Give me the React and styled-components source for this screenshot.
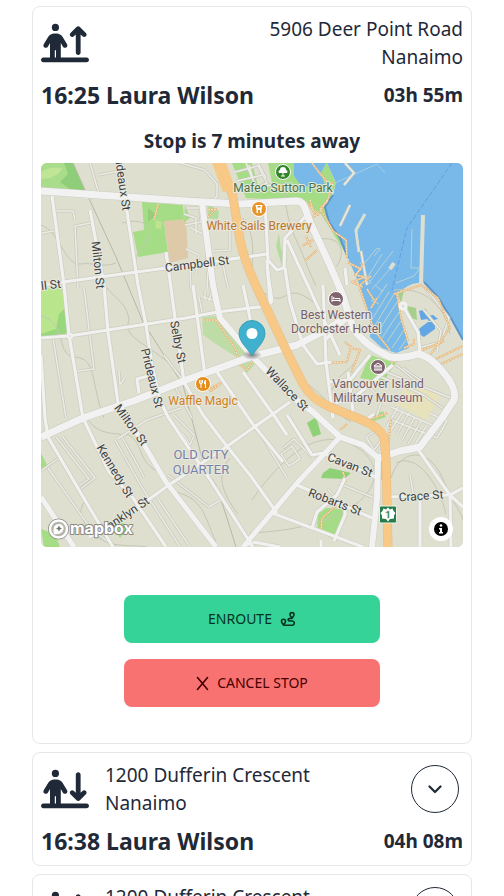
import React from "react";
import styled, { createGlobalStyle } from "styled-components";
import { FaPersonArrowUpFromLine, FaPersonArrowDownToLine } from "react-icons/fa6";

const GlobalStyle = createGlobalStyle`
  *, *::before, *::after { box-sizing: border-box; }
  body {
    margin: 0;
    background: #ffffff;
    color: #1f2937;
    font-family: "Noto Sans", "Open Sans", sans-serif;
  }
`;

const StopList = styled.main`
  display: flex;
  flex-direction: column;
  gap: 8px;
  height: 100vh;
  padding: 6px 32px;
  overflow-y: auto;
  scrollbar-width: none;
`;

const Card = styled.article`
  display: flex;
  flex-direction: column;
  flex-shrink: 0;
  gap: 8px;
  padding: 8px 8px ${(p) => (p.$open ? "36px" : "8px")};
  border: 1px solid #e5e7eb;
  border-radius: 8px;
`;

const Header = styled.header`
  display: flex;
  align-items: center;
  gap: 16px;
`;

const Direction = styled.span`
  display: flex;
  flex-shrink: 0;
  font-size: 48px;
`;

const Address = styled.address`
  flex: 1;
  font-size: 19px;
  font-style: normal;
  line-height: 28px;
  text-align: ${(p) => (p.$end ? "right" : "left")};
`;

const ExpandButton = styled.button`
  display: flex;
  align-items: center;
  justify-content: center;
  width: 48px;
  height: 48px;
  margin-right: 4px;
  padding: 0;
  border: 1px solid #1f2937;
  border-radius: 50%;
  background: transparent;
  color: #1f2937;
`;

const Summary = styled.div`
  display: flex;
  align-items: center;
  justify-content: space-between;
`;

const Passenger = styled.h2`
  margin: 0;
  font-size: 23px;
  font-weight: 700;
  line-height: 32px;
`;

const Countdown = styled.span`
  font-size: 19px;
  font-weight: 700;
  line-height: 28px;
`;

const Distance = styled.p`
  margin: 8px 0 0;
  font-size: 19px;
  font-weight: 700;
  line-height: 28px;
  text-align: center;
`;

const MapFrame = styled.div`
  position: relative;
  height: 384px;
  overflow: hidden;
  border-radius: 6px;
  background: #dedfcf;
`;

const MapCanvas = styled.svg`
  display: block;
  width: 100%;
  height: 100%;
`;

const LogoLink = styled.a`
  position: absolute;
  bottom: 6px;
  left: 6px;
  display: flex;
`;

const InfoButton = styled.button`
  position: absolute;
  right: 10px;
  bottom: 6px;
  display: flex;
  align-items: center;
  justify-content: center;
  width: 24px;
  height: 24px;
  padding: 0;
  border: 0;
  border-radius: 50%;
  background: #ffffff;
`;

const Actions = styled.div`
  display: flex;
  flex-direction: column;
  align-items: center;
  gap: 16px;
  margin-top: 40px;
`;

const ActionButton = styled.button`
  display: flex;
  align-items: center;
  justify-content: center;
  gap: 8px;
  width: 256px;
  max-width: 100%;
  height: 48px;
  border: 0;
  border-radius: 8px;
  background: ${(p) => (p.$tone === "success" ? "#36d399" : "#f87272")};
  color: ${(p) => (p.$tone === "success" ? "#003320" : "#470000")};
  font-family: inherit;
  font-size: 14px;
  line-height: 16px;
`;

const MapLabel = styled.text`
  font-family: Roboto, "Liberation Sans", sans-serif;
  font-size: ${(p) => p.$size || 12}px;
  font-weight: ${(p) => p.$weight || 400};
  fill: ${(p) => p.$color || "#3d3f45"};
  stroke: #e8e8dc;
  stroke-width: 2px;
  stroke-linejoin: round;
  paint-order: stroke;
  text-anchor: middle;
`;

const Wordmark = styled.text`
  font-family: Inter, "Open Sans", sans-serif;
  font-size: 16px;
  font-weight: 700;
  fill: #ffffff;
  stroke: #8a8a80;
  stroke-width: 2px;
  stroke-linejoin: round;
  paint-order: stroke;
`;

const parks = [
  ["#a9dc8b", "M41 163H73L85 191L41 188Z"],
  ["#8fce78", "M64 163H73L85 191L71 190L60 182L68 174Z"],
  ["#c0e594", "M41 172Q50 166 62 168Q61 174 50 178L41 179Z"],
  ["#a5dc86", "M142 202L183 205L184 220L164 222L168 252L138 257L133 232L144 230Z"],
  ["#94ce7b", "M148 208L156 215L148 222Z"],
  ["#bfe48f", "M156 220L162 222L161 229L155 228Z"],
  ["#decaa8", "M164 221L186 219L188 258L170 263Z"],
  ["#b9e68c", "M41 288H62L68 333L41 338Z"],
  ["#98d77c", "M59 314L65 308L68 333L41 338V334L56 329Z"],
  ["#a5dc86", "M232 163H327L336 184L326 208L334 226L347 255L343 262L320 222L306 201L246 198Z"],
  ["#dedfcf", "M252 163H268L272 183L258 186Z M305 204L321 214L346 254L346 290L336 282Z"],
  ["#bedca5", "M202 317L216 316L246 352L238 358L222 348L203 335Z M241 363L258 361L246 374Z"],
  ["#b5dca0", "M279 233L276 246L282 266L287 262L281 249Z M207 203L219 211L218 220L208 218Z"],
  ["#a5dc86", "M370 355L396 363L383 382L360 378Z"],
  ["#e8e2bb", "M406 385L441 394L427 420L396 404Z"],
  ["#8fd176", "M307 423L316 417L321 434L313 437Z M321 478L323 473L330 468L351 473L344 479Z"],
  ["#a5dc86", "M318 514L326 508L343 509L345 516L334 539L317 531Z M380 460L382 459L383 480L380 481Z"],
  ["#a5dc86", "M41 453L48 467L41 470Z M41 529L55 534L60 547H44Z M113 526L122 522L128 528L120 538Z"],
  ["#a5dc86", "M366 418L383 411L386 417L374 421Z M185 205L190 218L184 222Z"],
];

const water =
  "M327 163H463V340L452 320L438 297L424 282L412 284L396 293L402 322L409 348L396 353L382 348L370 337L370 316L360 286L348 258L340 238L329 222L325 207L333 195L336 183Z M294 163H326L321 173L325 185L311 184L303 188L294 176Z";

const contours = [
  "M41 225C60 231 64 265 80 264C92 262 105 268 116 263",
  "M122 223C148 216 159 231 140 250C132 260 139 264 133 271",
  "M41 316C66 321 56 353 73 357C98 357 90 383 104 418",
  "M107 288C119 302 127 304 129 320C121 340 153 343 183 377",
  "M85 415C95 433 106 433 129 435C144 444 137 462 159 472L176 492C203 499 204 515 216 542",
  "M86 500C76 511 82 522 94 534C110 549 128 544 147 547",
  "M252 500C280 460 318 422 358 448S366 528 250 533",
  "M391 478C400 448 429 447 442 477S461 512 463 520",
  "M396 463C417 452 439 484 446 514",
  "M243 218C265 249 239 276 264 293S284 279 313 302",
  "M274 163C288 187 283 212 294 235S306 265 316 286",
  "M320 239C343 236 346 254 336 267",
  "M230 458C216 474 221 492 238 514",
  "M332 390C341 367 353 375 360 350",
  "M300 380C322 390 335 415 351 422",
  "M394 290C428 286 446 310 450 334",
];

const lanes = [
  "M90 163L99 194L86 199", "M98 175L120 171", "M56 211H73L75 220", "M42 233L54 231",
  "M91 223L75 226L78 288", "M84 288L94 369L78 371", "M53 338L66 418",
  "M186 208H200L201 222L185 225", "M191 228L207 236V263L190 265", "M215 220L230 228V250L214 251",
  "M186 249L199 255L196 274", "M196 234V218L184 214", "M190 270L191 290", "M208 270L207 289",
  "M215 265L222 260L228 288", "M180 201C198 194 211 206 217 196V184L205 170L180 163",
  "M235 172L258 166L267 183L247 191", "M237 181L263 175M243 190L271 185M249 165L256 190",
  "M246 163L252 178M258 163L266 178", "M56 437L89 479L80 485M42 470L60 457",
  "M63 437L95 478L79 490", "M115 440L143 489L180 547", "M117 439L147 420L181 408",
  "M122 437L144 477", "M48 468L91 529L115 547", "M174 415L194 435L190 445L182 433",
  "M209 507L222 499L218 489", "M156 496L190 547", "M168 475L209 507",
  "M283 448L294 439L312 457M281 454L292 446L300 459L289 466L281 454",
  "M199 297L202 312M203 297L215 301M205 291V300M212 290L209 301",
  "M389 419L437 438L447 421L429 413M391 407L432 425M398 407L387 426M403 411L391 430M409 413L397 434M415 417L402 440M421 421L408 444M427 425L414 446",
  "M381 377L422 394L444 409M386 372L451 398M396 365L416 381M403 368L420 380",
  "M366 437L375 431L382 439L374 450L366 437", "M125 377L120 385L119 371",
  "M258 430L287 478M410 475L414 498M328 489L336 498M338 483L372 497",
  "M345 163L354 173L344 185M350 205L340 226M361 251L367 285",
  "M164 355L184 382M171 379L192 418", "M424 286L449 318L441 342L422 347",
  "M423 309L441 331L437 352", "M370 388L382 400L376 418",
];

const streets = [
  "M52 196L62 270L64 285L69 335L83 418L109 472L133 498L166 547",
  "M90 210L104 285L108 332L118 403",
  "M119 163L126 205L138 285L146 325L152 365L160 400L168 417L209 478L253 547",
  "M166 252L171 288L175 318L184 382L203 415L226 445L250 475L277 513",
  "M41 285L63 282L166 268L267 254",
  "M41 338L69 336L186 318L217 312L268 306L272 301L267 267",
  "M41 355L45 418L48 437L79 490L113 547",
  "M89 537L133 511L166 487L226 447L290 402",
  "M217 372L252 423L283 462",
  "M243 372L275 417L287 435",
  "M265 203L268 260L277 270L284 268L285 238L305 217",
  "M287 240L310 290L340 355",
  "M285 268L290 302L303 345L317 364L331 362",
  "M243 285L250 318L251 350", "M193 285L205 375", "M267 260L270 302",
  "M323 285L326 362L333 418", "M326 339L347 319",
  "M370 355L350 380L330 382", "M393 365L357 395L336 403", "M348 372L353 412",
  "M403 306L418 332L420 353", "M287 415L312 455L323 453", "M323 453L375 477",
  "M297 485L372 518", "M272 513L363 547", "M345 478L337 495L317 512L312 528",
  "M345 505V515L334 541", "M388 497L450 495", "M420 498V547",
  "M417 448L450 495L451 547", "M450 495L463 507M450 495L463 488",
  "M253 542L280 547M321 540V547M243 547L252 542",
  "M139 393L137 379L148 376", "M345 268L347 285", "M368 418L374 414",
];

const avenues = [
  ["M41 191L186 201L240 204L297 201Q303 202 305 208L310 222L329 263L343 296L353 328Q366 347 390 357Q404 359 417 354Q429 355 443 372Q457 388 454 400L442 418L420 447L400 451L378 458", 7],
  ["M41 437L83 418L136 400L186 380L250 357L297 345L330 328L345 318", 7],
  ["M202 203L213 285L220 318L253 357L290 395L313 412L340 437L363 445L378 458L377 498L372 547", 6],
  ["M340 437L297 483L243 547", 5],
  ["M118 403L146 448L166 482L216 547", 5],
  ["M41 497L74 547", 5],
];

const highway =
  "M221 163L233 197L240 240Q244 260 257 288L287 352L303 384Q311 399 330 407L362 420Q379 427 384 437L386 458L388 547";

const trails = [
  "M158 204L154 220", "M312 163L318 171L328 183L333 183M332 185L327 202L320 208L333 231L346 240L347 258",
  "M306 202L318 215L327 200M305 211L314 218M310 200L315 217", "M208 210L216 209L207 218",
  "M203 320L216 320L235 348L240 365L247 370L253 360", "M209 389L223 382L211 391Z",
  "M302 246L313 240M306 236L311 247M305 261L317 250",
  "M347 262L361 269L355 275L365 277L352 282L363 287", "M364 263L356 275M371 276L360 285",
  "M359 287L374 330L390 350M367 289L374 300M371 308L377 298", "M397 294L401 318L408 341",
  "M394 294L421 285L438 298L450 328L430 355", "M391 363L444 341M439 365L463 354M432 361L463 346",
  "M328 363L347 362L351 347L345 342M351 348L360 350L351 373", "M404 348L414 344L414 338",
  "M343 472L346 482M336 506L322 518L321 532", "M391 418L388 448M391 457H384",
  "M162 489L167 486M340 430L347 424", "M367 420L388 413",
];

const docks = [
  ["M335 183L377 164L385 173", 1, "#a8cde0"],
  ["M423 215L421 284", 4, "#dedfcf"],
  ["M365 214L356 230L359 252", 3, "#dedfcf"],
  ["M358 232L361 252", 1, "#78b9ea"],
  ["M412 229L411 268H420L414 276L396 283", 1, "#b5d1d6"],
  ["M377 248L363 265M382 254L366 280M393 251L368 284M377 248L380 249L374 256", 1, "#b5d1d6"],
  ["M394 263L390 269", 4, "#dedfcf"],
  ["M390 269L372 289M360 262L371 284", 1, "#b5d1d6"],
  ["M387 284L373 305M389 292L371 321M394 294L374 327M397 302L376 335M399 312L382 338M401 321L387 342M404 330L392 348M408 337L399 350M375 285L383 292M371 300L379 304", 1, "#c0d4cb"],
];

const streetLabels = [
  ["ideaux St", 123, 186, 82], ["Milton St", 98, 265, 84], ["Campbell St", 197, 264, -7],
  ["ll St", 51, 285, -7], ["Selby St", 178, 342, 79], ["Prideaux St", 152, 378, 76],
  ["Milton St", 131, 425, 54], ["Wallace St", 287, 389, 46], ["Kennedy St", 115, 471, 59],
  ["anklyn St", 128, 513, -34], ["Cavan St", 350, 465, 21], ["Robarts St", 335, 502, 21],
  ["Crace St", 421, 496, -4],
];

const placeLabels = [
  ["Mafeo Sutton Park", 283, 192, "#46734a"],
  ["White Sails Brewery", 259, 230, "#bb7429"],
  ["Best Western", 336, 319, "#765e6b"],
  ["Dorchester Hotel", 336, 333, "#765e6b"],
  ["Vancouver Island", 378, 388, "#765e6b"],
  ["Military Museum", 378, 402, "#765e6b"],
  ["Waffle Magic", 203, 405, "#cf8020"],
];

function PlacePin({ x, y, color, children }) {
  return (
    <g transform={`translate(${x} ${y})`} stroke="#ffffff" fill="none">
      <circle r="7.5" fill={color} />
      {children}
    </g>
  );
}

function CityMap() {
  return (
    <MapCanvas viewBox="41 163 422 384" preserveAspectRatio="xMidYMid slice" role="img" aria-label="Map of the stop in Nanaimo">
      <defs>
        <radialGradient id="pin-shadow">
          <stop offset="0" stopColor="#333" stopOpacity="0.6" />
          <stop offset="1" stopColor="#333" stopOpacity="0" />
        </radialGradient>
      </defs>
      <path d="M41 163H463V547H41Z" fill="#dedfcf" />
      {parks.map(([fill, d]) => <path key={d} d={d} fill={fill} />)}
      <path d={water} fill="#78b9ea" />
      <path d="M333 195L325 207L329 222L340 238L348 258M424 282L438 297L452 320L463 340" fill="none" stroke="#5c96c7" strokeWidth="2" />
      <path d="M399 293L408 286L420 284L434 298L450 325L446 342L424 350L409 347L403 322Z" fill="#dedfcf" />
      <path d="M398 294L404 290L401 303ZM407 306L416 308L417 320L411 318Z" fill="#a5cf8b" />
      <path d="M419 311L426 309L427 316L433 315L438 319L429 321L427 319L421 320ZM420 328L428 322L435 322V329L424 337L417 333Z" fill="#62a6e6" />
      <path d="M452 163L407 228L392 290" fill="none" stroke="#609fdd" strokeDasharray="5 2" />
      <g fill="none">
        {docks.map(([d, width, color]) => <path key={d} d={d} stroke={color} strokeWidth={width} />)}
      </g>
      <g fill="none" stroke="#c5c6b6">
        {contours.map((d) => <path key={d} d={d} />)}
        <path d="M73 163L86 192L116 257L143 322L183 385L205 470L216 485L226 515L236 547" stroke="#b7b8a9" />
      </g>
      <g fill="none" strokeLinejoin="round">
        {lanes.map((d) => <path key={d} d={d} stroke="#c9cabd" strokeWidth="3" />)}
        {lanes.map((d) => <path key={`${d}-top`} d={d} stroke="#ecece6" strokeWidth="1.5" />)}
        {trails.map((d) => <path key={d} d={d} stroke="#e6b67b" strokeWidth="2" />)}
        {trails.map((d) => <path key={`${d}-top`} d={d} stroke="#f9e9cd" strokeWidth="1" strokeDasharray="2 1" />)}
        {streets.map((d) => <path key={d} d={d} stroke="#cdcec2" strokeWidth="4.5" />)}
        {avenues.map(([d, width]) => <path key={d} d={d} stroke="#cccdc3" strokeWidth={width + 1} />)}
        {streets.map((d) => <path key={`${d}-top`} d={d} stroke="#f1f1f0" strokeWidth="3.2" />)}
        {avenues.map(([d, width]) => <path key={`${d}-top`} d={d} stroke="#f2f2f2" strokeWidth={width} />)}
        <path d={highway} stroke="#e2bd8a" strokeWidth="9" />
        <path d={highway} stroke="#f8c986" strokeWidth="8" />
        <path d="M216 155L229 190" stroke="#f8c986" strokeWidth="13" />
      </g>
      <circle cx="403" cy="306" r="3" fill="#dedfcf" stroke="#f2f2f2" strokeWidth="3" />
      <circle cx="70" cy="336" r="2" fill="#dedfcf" stroke="#f2f2f2" strokeWidth="2" />
      {streetLabels.map(([name, x, y, angle]) => (
        <MapLabel key={`${name}-${x}`} transform={`translate(${x} ${y}) rotate(${angle})`} y="4">{name}</MapLabel>
      ))}
      {placeLabels.map(([name, x, y, color]) => (
        <MapLabel key={name} x={x} y={y} $color={color}>{name}</MapLabel>
      ))}
      <MapLabel x="201" y="459" $size={13} $color="#7881a8">OLD CITY</MapLabel>
      <MapLabel x="201" y="474" $size={13} $color="#7881a8">QUARTER</MapLabel>
      <PlacePin x={283} y={172} color="#35862b">
        <path d="M0 0V4M-2 4H2" />
        <path d="M-4 1A2 2 0 0 1-3-2A3 3 0 0 1 3-2A2 2 0 0 1 4 1Z" fill="#fff" stroke="none" />
      </PlacePin>
      <PlacePin x={259} y={209} color="#e7942c">
        <path d="M-3.500-4H3.500L2.500 1V4H1V1H-1V4H-2.500V1ZM-1.500-3V-1.500H1.500V-3Z" fill="#fff" fillRule="evenodd" stroke="none" />
      </PlacePin>
      <PlacePin x={336} y={299} color="#80656f">
        <path d="M-4-3V3M4 0V3M-4 1.5H4M-1-.5H4" />
        <circle cx="-2.2" cy="-.7" r="1" fill="#fff" stroke="none" />
      </PlacePin>
      <PlacePin x={378} y={367} color="#80656f">
        <path d="M-4-1L0-4L4-1ZM-4 3H4M-3-1V3M-1-1V3M1-1V3M3-1V3" />
      </PlacePin>
      <PlacePin x={203} y={384} color="#e58e1c">
        <path d="M-2-4V4M-3.5-4V-1Q-2 1-.5-1V-4M2.5 4V-4Q1-3 1.5 0H2.5" />
      </PlacePin>
      <g>
        <rect x="379.5" y="506" width="17" height="17" rx="1.5" fill="#287d4c" stroke="#eef2e8" />
        <path d="M388 507.500L390 509.500L392.500 508.500L393.500 511L395.500 513L394 515.500L394 518.500L390 519L388 521.500L386 519L382 518.500L382 515.500L380.500 513L382.500 511L383.500 508.500L386 509.500Z" fill="#fff" />
        <MapLabel x="388" y="518" $size={9} $weight={500} $color="#287d4c">1</MapLabel>
      </g>
      <ellipse cx="252" cy="355" rx="10" ry="5" fill="url(#pin-shadow)" />
      <path d="M252 355.500C249 350 239 342 239 333.500A13 13 0 0 1 265 333.500C265 342 255 350 252 355.500Z" fill="#3fb1ce" stroke="#399fb9" />
      <circle cx="252" cy="333.500" r="5.500" fill="#fff" />
    </MapCanvas>
  );
}

function MapboxLogo() {
  return (
    <svg width="96" height="24" viewBox="0 0 96 24" aria-hidden="true">
      <circle cx="11.500" cy="12" r="9" fill="#b5b5ab" stroke="#8a8a80" strokeWidth="3" />
      <circle cx="11.500" cy="12" r="8.500" fill="none" stroke="#fff" strokeWidth="2.500" />
      <path d="M7 17C5 9 9 6.500 13 7A4.500 4.500 0 0 1 15.500 14.500C13 17.500 9 17.500 7 17Z" fill="#fff" />
      <path d="M12 8.500L13 10.500L15 11.500L13 12.500L12 14.500L11 12.500L9 11.500L11 10.500Z" fill="#77776f" />
      <Wordmark x="23" y="17">mapbox</Wordmark>
    </svg>
  );
}

function StopMap() {
  return (
    <MapFrame>
      <CityMap />
      <LogoLink href="#mapbox" aria-label="Mapbox homepage"><MapboxLogo /></LogoLink>
      <InfoButton type="button" aria-label="Map attribution">
        <svg width="14" height="14" viewBox="0 0 14 14" aria-hidden="true">
          <circle cx="7" cy="7" r="7" />
          <path d="M5 6H8V10H9V11.500H5V10H6V7.500H5Z" fill="#fff" />
          <circle cx="7" cy="3.500" r="1.300" fill="#fff" />
        </svg>
      </InfoButton>
    </MapFrame>
  );
}

function RouteIcon() {
  return (
    <svg width="16" height="16" viewBox="0 0 16 16" fill="none" stroke="currentColor" strokeWidth="1.600" strokeLinejoin="round" strokeLinecap="round" aria-hidden="true">
      <path d="M3.500 14C2.500 12.500 1.500 11.500 1.500 10.300A2 2 0 0 1 5.500 10.300C5.500 11.500 4.500 12.500 3.500 14Z" />
      <path d="M12 7.300C11 5.800 10 4.800 10 3.600A2 2 0 0 1 14 3.600C14 4.800 13 5.800 12 7.300Z" />
      <path d="M11.500 7.500H9.500Q7.800 7.700 8.200 9Q8.500 10 10 10H12.500Q14.300 10.300 14.300 12T12.500 14.200H4" />
    </svg>
  );
}

function CrossIcon() {
  return (
    <svg width="13" height="15" viewBox="0 0 13 15" fill="none" stroke="currentColor" strokeWidth="1.600" strokeLinecap="round" aria-hidden="true">
      <path d="M1.500 1.500L11.500 13.500M11.500 1.500L1.500 13.500" />
    </svg>
  );
}

function ChevronIcon() {
  return (
    <svg width="14" height="9" viewBox="0 0 14 9" fill="none" stroke="currentColor" strokeWidth="2.200" strokeLinecap="round" strokeLinejoin="round" aria-hidden="true">
      <path d="M1.500 1.500L7 7L12.500 1.500" />
    </svg>
  );
}

function StopAddress({ street, city, end }) {
  return <Address $end={end}>{street}<br />{city}</Address>;
}

function CollapsedStop({ street, city, time, passenger, countdown }) {
  return (
    <Card>
      <Header>
        <Direction><FaPersonArrowDownToLine aria-hidden="true" /></Direction>
        <StopAddress street={street} city={city} />
        <ExpandButton type="button" aria-label="Show stop"><ChevronIcon /></ExpandButton>
      </Header>
      <Summary>
        <Passenger>{time} {passenger}</Passenger>
        <Countdown>{countdown}</Countdown>
      </Summary>
    </Card>
  );
}

export default function App() {
  return (
    <>
      <GlobalStyle />
      <StopList>
        <Card $open>
          <Header>
            <Direction><FaPersonArrowUpFromLine aria-hidden="true" /></Direction>
            <StopAddress street="5906 Deer Point Road" city="Nanaimo" end />
          </Header>
          <Summary>
            <Passenger>16:25 Laura Wilson</Passenger>
            <Countdown>03h 55m</Countdown>
          </Summary>
          <Distance>Stop is 7 minutes away</Distance>
          <StopMap />
          <Actions>
            <ActionButton type="button" $tone="success">
              ENROUTE <RouteIcon />
            </ActionButton>
            <ActionButton type="button" $tone="error">
              <CrossIcon /> CANCEL STOP
            </ActionButton>
          </Actions>
        </Card>
        <CollapsedStop street="1200 Dufferin Crescent" city="Nanaimo" time="16:38" passenger="Laura Wilson" countdown="04h 08m" />
        <CollapsedStop street="1200 Dufferin Crescent" city="Nanaimo" time="16:38" passenger="Laura Wilson" countdown="04h 08m" />
      </StopList>
    </>
  );
}
